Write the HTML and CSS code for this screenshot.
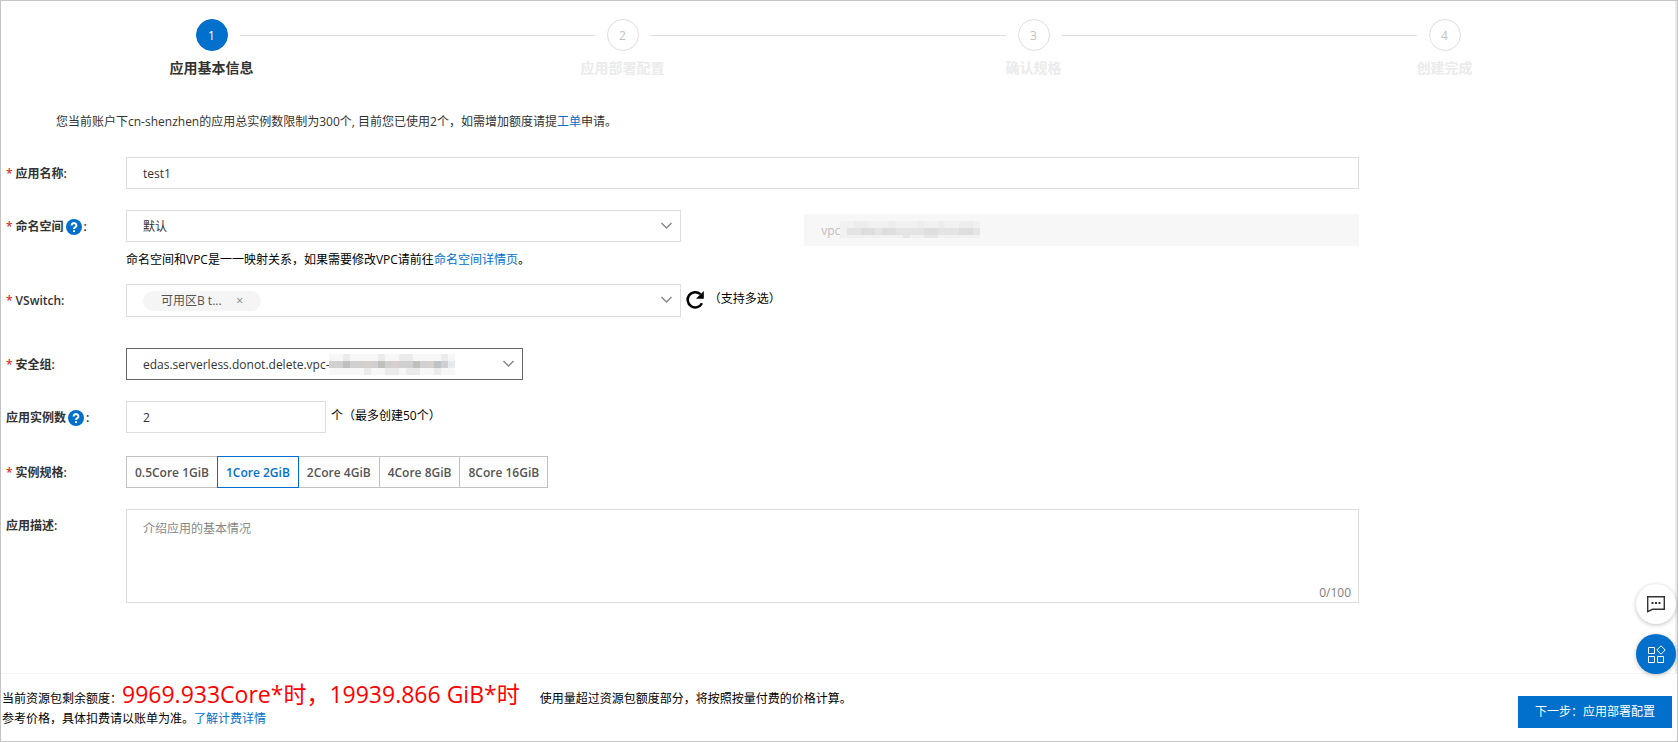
FILE: index.html
```
<!DOCTYPE html>
<html lang="zh-CN">
<head>
  <meta charset="UTF-8">
  <meta name="viewport" content="width=device-width, initial-scale=1.0">
  <title>创建应用</title>
  <link rel="stylesheet" href="styles.css">
</head>
<body>
  <div class="page">
    <main class="content">
      <ol class="steps">
        <li class="step active"><span class="step-num">1</span><span class="step-title">应用基本信息</span></li>
        <li class="step"><span class="step-num">2</span><span class="step-title">应用部署配置</span></li>
        <li class="step"><span class="step-num">3</span><span class="step-title">确认规格</span></li>
        <li class="step"><span class="step-num">4</span><span class="step-title">创建完成</span></li>
      </ol>

      <p class="notice">您当前账户下cn-shenzhen的应用总实例数限制为300个, 目前您已使用2个，如需增加额度请提<a href="#">工单</a>申请。</p>

      <form class="form" id="app-form">
        <div class="row">
          <label class="label required" for="name">应用名称:</label>
          <div class="field"><input class="input" id="name" type="text" value="test1"></div>
        </div>

        <div class="row row-namespace">
          <label class="label required" for="namespace">命名空间<svg class="help" viewBox="0 0 16 16"><circle cx="8" cy="8" r="8"/><path d="M5.6 6.4a2.4 2.2 0 1 1 3.7 1.8C8.4 8.8 8 9.1 8 10M8 11.3v1.6"/></svg>:</label>
          <div class="field split">
            <div class="select">
              <select class="input" id="namespace"><option>默认</option></select>
              <svg class="arrow" viewBox="0 0 12 8"><path d="M1 1l5 5 5-5"/></svg>
            </div>
            <div class="vpc">
              <input class="input" type="text" value="vpc" aria-label="VPC" disabled>
              <svg class="mask vpc-mask" viewBox="0 0 140 17">
                <path fill="#f1f1f1" d="M0 0h140v17H0z"/>
                <path fill="#ededed" d="M14 0h14v7H14zM49 0h7v7h-7zM77 0h7v7h-7zM98 0h7v7h-7zM119 0h14v7h-14z"/>
                <path fill="#e4e4e4" d="M7 7h133v7H7z"/>
                <path fill="#dedede" d="M21 7h14v7H21zM42 7h14v7H42zM84 7h14v7H84zM119 7h14v7h-14z"/>
                <path fill="#e7e7e7" d="M63 14h7v3h-7zM84 14h14v3H84z"/>
              </svg>
            </div>
          </div>
          <p class="hint">命名空间和VPC是一一映射关系，如果需要修改VPC请前往<a href="#">命名空间详情页</a>。</p>
        </div>

        <div class="row row-vswitch">
          <label class="label required" for="vswitch">VSwitch:</label>
          <div class="field split">
            <div class="select">
              <div class="input tags">
                <span class="tag">可用区B t...<button class="tag-close" type="button" aria-label="移除">×</button></span>
                <input class="tag-input" id="vswitch" type="text">
              </div>
              <svg class="arrow" viewBox="0 0 12 8"><path d="M1 1l5 5 5-5"/></svg>
            </div>
            <button class="refresh" type="button" aria-label="刷新">
              <svg viewBox="0 0 20 20"><path class="ring" d="M15.4 4.2A7.6 7.6 0 1 0 17 13.2"/><path d="M18.8 1v7.8h-7.8z"/></svg>
            </button>
            <span class="note">（支持多选）</span>
          </div>
        </div>

        <div class="row row-group">
          <label class="label required" for="group">安全组:</label>
          <div class="field">
            <div class="select group">
              <select class="input" id="group"><option>edas.serverless.donot.delete.vpc-</option></select>
              <svg class="mask group-mask" viewBox="0 0 126 21">
                <path fill="#f7f7f7" d="M0 0h126v21H0z"/>
                <path fill="#ebebeb" d="M14 0h7v7h-7zM49 0h7v7h-7zM70 0h14v7H70zM112 0h7v7h-7zM35 14h7v7h-7zM56 14h14v7H56zM77 14h14v7H77zM105 14h7v7h-7z"/>
                <path fill="#d0d0d0" d="M0 7h126v7H0z"/>
                <path fill="#bfbfbb" d="M14 7h7v7h-7zM49 7h7v7h-7zM84 7h7v7h-7z"/>
                <path fill="#d6cfcb" d="M35 7h7v7h-7zM63 7h7v7h-7zM98 7h7v7h-7z"/>
                <path fill="#bcc4c5" d="M105 7h7v7h-7z"/>
                <path fill="#e6e9f0" d="M119 7h7v7h-7z"/>
              </svg>
              <svg class="arrow" viewBox="0 0 12 8"><path d="M1 1l5 5 5-5"/></svg>
            </div>
          </div>
        </div>

        <div class="row">
          <label class="label" for="count">应用实例数<svg class="help" viewBox="0 0 16 16"><circle cx="8" cy="8" r="8"/><path d="M5.6 6.4a2.4 2.2 0 1 1 3.7 1.8C8.4 8.8 8 9.1 8 10M8 11.3v1.6"/></svg>:</label>
          <div class="field split">
            <input class="input count" id="count" type="text" value="2">
            <span class="unit">个（最多创建50个）</span>
          </div>
        </div>

        <div class="row row-spec">
          <span class="label required" id="spec-label">实例规格:</span>
          <div class="field specs" role="group" aria-labelledby="spec-label">
            <button class="spec" type="button">0.5Core 1GiB</button>
            <button class="spec selected" type="button">1Core 2GiB</button>
            <button class="spec" type="button">2Core 4GiB</button>
            <button class="spec" type="button">4Core 8GiB</button>
            <button class="spec" type="button">8Core 16GiB</button>
          </div>
        </div>

        <div class="row">
          <label class="label" for="desc">应用描述:</label>
          <div class="field desc">
            <textarea class="input" id="desc" maxlength="100" placeholder="介绍应用的基本情况"></textarea>
            <span class="counter">0/100</span>
          </div>
        </div>
      </form>
    </main>

    <footer class="footer">
      <div class="price">
        <p>当前资源包剩余额度：<span class="quota">9969.933Core*时，19939.866 GiB*时</span><span class="over">使用量超过资源包额度部分，将按照按量付费的价格计算。</span></p>
        <p>参考价格，具体扣费请以账单为准。<a href="#">了解计费详情</a></p>
      </div>
      <button class="next" type="submit" form="app-form">下一步：应用部署配置</button>
    </footer>

    <div class="floating">
      <button class="float-btn" type="button" aria-label="咨询">
        <svg viewBox="0 0 20 20"><path d="M1.7 2.7h16.6v12.6H6.5l-4.8 2.4z"/><path class="dots" d="M5.5 8h2v2h-2zM9 8h2v2H9zM12.5 8h2v2h-2z"/></svg>
      </button>
      <button class="float-btn blue" type="button" aria-label="应用">
        <svg viewBox="0 0 20 20"><path d="M2.5 3.5h6v6h-6zM2.5 12.5h6v6h-6zM11.5 12.5h6v6h-6zM15 1.8l4.2 4.2-4.2 4.2L10.8 6z"/></svg>
      </button>
    </div>
  </div>
</body>
</html>
```
FILE: styles.css
```
* {
  box-sizing: border-box;
}
body {
  margin: 0;
  font-family: "Open Sans", "Noto Sans CJK SC", sans-serif;
  font-size: 12px;
  line-height: 18px;
  color: #000;
  background: #fff;
}
p {
  margin: 0;
}
a {
  color: #0070cc;
  text-decoration: none;
}
button, input, select, textarea {
  font: inherit;
  color: inherit;
}
button {
  cursor: pointer;
}
.page {
  position: relative;
  display: flex;
  flex-direction: column;
  min-height: 100vh;
  border: 1px solid #c4c4c4;
}
.content {
  flex: 1;
  padding: 18px 25px 0 5px;
  border-right: 2px solid #ebebeb;
}

/* steps */
.steps {
  display: flex;
  margin: 0;
  padding: 0;
  list-style: none;
}
.step {
  position: relative;
  flex: 1;
  display: flex;
  flex-direction: column;
  align-items: center;
  gap: 8px;
  color: #ebebeb;
}
.step::after {
  content: "";
  position: absolute;
  top: 16px;
  left: calc(50% + 28px);
  right: calc(28px - 50%);
  height: 1px;
  background: #dedede;
}
.step:last-child::after {
  display: none;
}
.step-num {
  width: 32px;
  height: 32px;
  border: 1px solid #dedede;
  border-radius: 50%;
  line-height: 32px;
  text-align: center;
  color: #c1c1c1;
}
.step-title {
  font-size: 14px;
  font-weight: bold;
}
.active {
  color: #333;
}
.active .step-num {
  border-color: #0070cc;
  background: #0070cc;
  color: #fff;
}

/* form */
.notice {
  margin: 36px 0 26px 50px;
  color: #333;
}
.form {
  display: flex;
  flex-direction: column;
  gap: 21px;
}
.row {
  display: grid;
  grid-template-columns: 120px 75%;
}
.row-vswitch {
  margin-top: -6px;
}
.row-group {
  margin-top: 10px;
}
.row-spec {
  margin-top: 2px;
}
.label {
  display: flex;
  align-items: center;
  height: 32px;
  padding-top: 2px;
  font-weight: 600;
  color: #333;
}
.required::before {
  content: "*";
  margin-right: 3px;
  color: #d93026;
}
.help {
  width: 16px;
  height: 16px;
  margin: 0 2px;
  fill: #0070cc;
}
.help path {
  fill: none;
  stroke: #fff;
  stroke-width: 2;
}
.input {
  display: block;
  width: 100%;
  height: 32px;
  padding: 0 16px;
  border: 1px solid #dedede;
  border-radius: 0;
  outline: 0;
  appearance: none;
  background: #fff;
  color: #333;
}
.split {
  display: flex;
}
.select {
  position: relative;
  width: 45%;
}
.select .input {
  padding-top: 1px;
}
.arrow {
  position: absolute;
  right: 8px;
  top: 12px;
  width: 13px;
  height: 8px;
  fill: none;
  stroke: #888;
  stroke-width: 1.5;
}
.vpc {
  position: relative;
  width: 45%;
  margin: 4px 0 -4px auto;
}
.vpc .input {
  border-color: #f7f7f7;
  background: #f7f7f7;
  color: #c1c1c1;
}
.mask {
  position: absolute;
  shape-rendering: crispEdges;
}
.vpc-mask {
  left: 36px;
  top: 7px;
  width: 140px;
  height: 17px;
}
.group-mask {
  left: 203px;
  top: 6px;
  width: 126px;
  height: 21px;
}
.hint {
  grid-column: 2;
  margin-top: 9px;
}
.select .tags {
  display: flex;
  align-items: center;
  height: 33px;
}
.tag {
  display: flex;
  flex: none;
  align-items: center;
  justify-content: space-between;
  width: 118px;
  height: 20px;
  padding: 0 18px;
  border-radius: 10px;
  background: #f5f5f5;
  color: #555;
}
.tag-close {
  padding: 0;
  border: 0;
  background: none;
  color: #808080;
}
.tag-input {
  flex: 1;
  min-width: 0;
  margin-right: 16px;
  padding: 0;
  border: 0;
  outline: 0;
  background: none;
}
.refresh {
  width: 20px;
  height: 20px;
  margin: 6px 4px 0;
  padding: 0;
  border: 0;
  background: none;
}
.refresh svg {
  display: block;
}
.ring {
  fill: none;
  stroke: #000;
  stroke-width: 2.5;
}
.note, .unit {
  padding-top: 6px;
}
.group {
  width: 397px;
}
.group .input {
  border-color: #666;
}
.count {
  width: 200px;
}
.unit {
  padding-left: 5px;
}
.specs {
  display: flex;
}
.spec {
  height: 32px;
  margin-right: -1px;
  padding: 1px 8px 0;
  border: 1px solid #c1c1c1;
  background: #fff;
  font-weight: 600;
  color: #555;
}
.selected {
  position: relative;
  border-color: #0070cc;
  color: #0070cc;
}
.desc {
  position: relative;
}
textarea.input {
  height: 94px;
  padding: 10px 16px;
  resize: none;
}
textarea::placeholder {
  color: #888;
}
.counter {
  position: absolute;
  right: 8px;
  bottom: 1px;
  color: #808080;
}

/* footer */
.footer {
  display: flex;
  justify-content: space-between;
  align-items: flex-start;
  padding: 4px 5px 13px 1px;
  border-top: 1px solid #f5f5f5;
}
.quota {
  font-size: 23px;
  line-height: 32px;
  color: #f00;
}
.over {
  margin-left: 20px;
}
.next {
  height: 32px;
  margin-top: 18px;
  padding: 0 17px;
  border: 0;
  background: #0070cc;
  color: #fff;
}

/* floating buttons */
.floating {
  position: absolute;
  right: 1px;
  bottom: 67px;
  display: flex;
  flex-direction: column;
  gap: 10px;
}
.float-btn {
  display: flex;
  align-items: center;
  justify-content: center;
  width: 40px;
  height: 40px;
  padding: 0;
  border: 0;
  border-radius: 50%;
  background: #fff;
  box-shadow: 0 1px 4px rgba(0, 0, 0, 0.25);
}
.float-btn svg {
  width: 20px;
  height: 20px;
  fill: none;
  stroke: #333;
  stroke-width: 1.4;
}
.float-btn .dots {
  fill: #333;
  stroke: none;
}
.blue {
  background: #0070cc;
}
.blue svg {
  stroke: #fff;
  stroke-width: 1;
}
```
